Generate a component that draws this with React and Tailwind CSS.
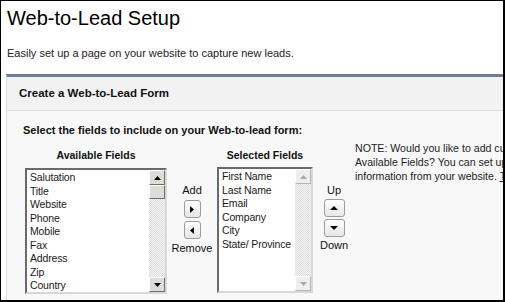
import React from "react";

function Tri({ dir = "up", color = "#000", w = 7, h = 4 }) {
  const pts = {
    up: `0,${h} ${w},${h} ${w / 2},0`,
    down: `0,0 ${w},0 ${w / 2},${h}`,
    right: `0,0 0,${h} ${w},${h / 2}`,
    left: `${w},0 ${w},${h} 0,${h / 2}`,
  }[dir];
  return (
    <svg width={w} height={h} viewBox={`0 0 ${w} ${h}`} className="block">
      <polygon points={pts} fill={color} />
    </svg>
  );
}

function ScrollBtn({ dir, disabled }) {
  return (
    <div
      className={
        "h-[15px] w-full flex items-center justify-center border border-t-white border-l-white " +
        (disabled
          ? "bg-[#eeeeec] border-r-[#b5b5b5] border-b-[#b5b5b5]"
          : "bg-[#dedcd6] border-r-[#6e6e6e] border-b-[#6e6e6e]")
      }
    >
      <Tri dir={dir} color={disabled ? "#a8a8a8" : "#000"} w={7} h={4} />
    </div>
  );
}

function Scrollbar({ thumb, disabled }) {
  return (
    <div className="w-[16px] h-full flex flex-col shrink-0">
      <ScrollBtn dir="up" disabled={disabled} />
      {thumb && (
        <div className="h-[14px] w-full bg-[#dedcd6] border border-t-white border-l-white border-r-[#6e6e6e] border-b-[#6e6e6e]" />
      )}
      <div className="flex-1 bg-[repeating-conic-gradient(#dcdcdc_0_25%,#f6f6f6_0_50%)] bg-[length:2px_2px]" />
      <ScrollBtn dir="down" disabled={disabled} />
    </div>
  );
}

function ListBox({ items, width, thumb, disabled }) {
  return (
    <div
      className={
        "h-[126px] bg-white border-2 border-t-[#6a6a6a] border-l-[#6a6a6a] border-r-[#d8d8d8] border-b-[#d8d8d8] flex " +
        width
      }
    >
      <div className="flex-1 pl-[3px] pt-[1px] overflow-hidden">
        {items.map((it) => (
          <div
            key={it}
            className="text-[10.5px] leading-[13.5px] text-[#1a1a1a] tracking-[-0.15px] whitespace-nowrap"
          >
            {it}
          </div>
        ))}
      </div>
      <Scrollbar thumb={thumb} disabled={disabled} />
    </div>
  );
}

function MoveBtn({ dir, wide }) {
  return (
    <div
      className={
        "h-[18px] rounded-[3px] border border-[#9c9c9c] bg-[linear-gradient(#ffffff,#e6e6e6)] flex items-center justify-center " +
        (wide ? "w-[21px]" : "w-[17px]")
      }
    >
      {dir === "right" || dir === "left" ? (
        <Tri dir={dir} w={4} h={7} />
      ) : (
        <Tri dir={dir} w={8} h={4} />
      )}
    </div>
  );
}

export default function App() {
  const available = [
    "Salutation",
    "Title",
    "Website",
    "Phone",
    "Mobile",
    "Fax",
    "Address",
    "Zip",
    "Country",
  ];
  const selected = [
    "First Name",
    "Last Name",
    "Email",
    "Company",
    "City",
    "State/ Province",
  ];
  return (
    <div className="w-[505px] h-[302px] overflow-hidden bg-white border-t border-l border-r-2 border-b-2 border-black font-['Liberation_Sans',Arial,sans-serif] text-[#1a1a1a]">
      <div className="pl-[6px] pt-[5px] text-[20px] leading-[24px] text-black whitespace-nowrap">
        Web-to-Lead Setup
      </div>
      <div className="pl-[6px] mt-[17px] text-[11px] leading-[13px] text-[#222] whitespace-nowrap">
        Easily set up a page on your website to capture new leads.
      </div>
      <div className="ml-[5px] mt-[14px] border-t-[3px] border-t-[#6f7c94] border-l border-l-[#dadada] bg-[#f8f8f8] h-[300px]">
        <div className="h-[34px] bg-[#f2f2f2] border-b border-b-[#dcdcdc] flex items-center pl-[12px] text-[11.5px] font-bold text-[#111] whitespace-nowrap">
          Create a Web-to-Lead Form
        </div>
        <div className="pl-[18px] pt-[13px]">
          <div className="-ml-[2px] text-[11px] leading-[13px] font-bold text-[#111] whitespace-nowrap">
            Select the fields to include on your Web-to-lead form:
          </div>
          <div className="flex items-start mt-[4px]">
            <div className="flex flex-col items-center w-[142px] pt-[8px]">
              <div className="text-[10.5px] leading-[13px] font-bold text-[#111] whitespace-nowrap">
                Available Fields
              </div>
              <div className="mt-[6px]">
                <ListBox items={available} width="w-[142px]" thumb />
              </div>
            </div>
            <div className="w-[50px] flex flex-col items-center pt-[43px] text-[11px] leading-[13px] text-[#111]">
              <div>Add</div>
              <div className="mt-[3px]">
                <MoveBtn dir="right" />
              </div>
              <div className="mt-[3px]">
                <MoveBtn dir="left" />
              </div>
              <div className="mt-[3px]">Remove</div>
            </div>
            <div className="flex flex-col items-center w-[96px] pt-[8px]">
              <div className="text-[10.5px] leading-[13px] font-bold text-[#111] whitespace-nowrap">
                Selected Fields
              </div>
              <div className="mt-[5px]">
                <ListBox items={selected} width="w-[96px]" disabled />
              </div>
            </div>
            <div className="w-[42px] flex flex-col items-center pt-[43px] text-[11px] leading-[13px] text-[#111]">
              <div>Up</div>
              <div className="mt-[2px]">
                <MoveBtn dir="up" wide />
              </div>
              <div className="mt-[2px]">
                <MoveBtn dir="down" wide />
              </div>
              <div className="mt-[2px]">Down</div>
            </div>
            <div className="flex-1 min-w-0 overflow-hidden text-[10.6px] leading-[14px] text-[#222] whitespace-nowrap">
              <div>NOTE: Would you like to add custom fields to the</div>
              <div>Available Fields? You can set up custom fields to capture</div>
              <div>
                information from your website.{" "}
                <span className="underline">To create custom fields</span>
              </div>
            </div>
          </div>
        </div>
      </div>
    </div>
  );
}
